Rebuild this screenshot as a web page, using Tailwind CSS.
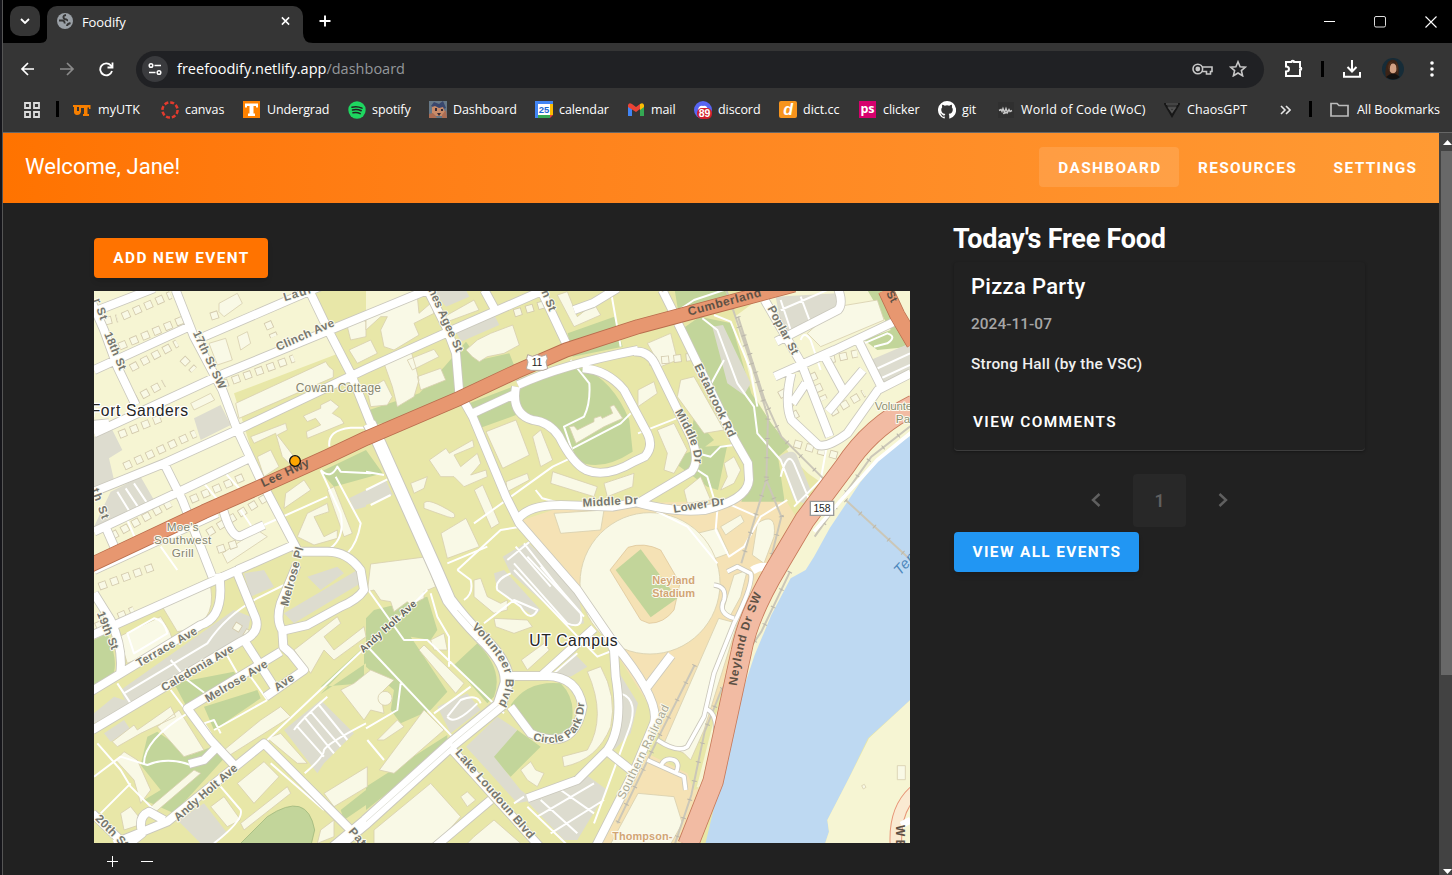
<!DOCTYPE html>
<html lang="en">
<head>
<meta charset="utf-8">
<title>Foodify</title>
<script src="https://cdn.jsdelivr.net/npm/@tailwindcss/browser@4"></script>
</head>
<body class="bg-[#212121]">
<div class="flex h-[875px] w-[1452px] overflow-hidden bg-[#212121] font-['Roboto',sans-serif] text-white">
  <div class="w-[3px] shrink-0 border-r border-[#555] bg-[#15151a]"></div>
  <div class="flex min-w-0 flex-1 flex-col">

    <!-- Browser tab strip -->
    <div class="flex h-[43px] shrink-0 bg-black font-['Open_Sans',sans-serif]">
      <div class="mt-1.5 ml-[7px] flex h-[30px] w-[30px] items-center justify-center rounded-[10px] bg-[#353535]">
        <svg width="10" height="6" viewBox="0 0 10 6" fill="none" stroke="#fff" stroke-width="1.8"><path d="M1 1l4 4 4-4"/></svg>
      </div>
      <svg class="mt-[33px] -mr-px" width="8" height="10" viewBox="0 0 8 10"><path d="M8 0Q8 10 0 10H8z" fill="#353535"/></svg>
      <div class="mt-1.5 flex h-[37px] w-[256px] items-start rounded-t-[10px] bg-[#353535] pt-[7px] pl-[10px]">
        <svg width="16" height="16" viewBox="0 0 16 16"><circle cx="8" cy="8" r="8" fill="#9aa0a6"/><path d="M9 2Q6 2.500 6.500 4.500t3 2q1 .5.500 1.500M2 7.500h3.500Q8 8 7.500 10.500M10 13q0-2 3.500-3" fill="none" stroke="#353535" stroke-width="1.900"/></svg>
        <span class="ml-[9px] text-[13px] leading-[18px] tracking-[-0.1px]">Foodify</span>
        <svg class="ml-auto mr-[13px] mt-[3px]" width="9" height="10" viewBox="0 0 10 10" stroke="#fff" stroke-width="1.700"><path d="M1 1l8 8M9 1L1 9"/></svg>
      </div>
      <svg class="mt-[33px]" width="10" height="10" viewBox="0 0 10 10"><path d="M0 0Q0 10 10 10H0z" fill="#353535"/></svg>
      <svg class="mt-[15px] ml-[6px]" width="12" height="12" viewBox="0 0 12 12" stroke="#fff" stroke-width="1.900"><path d="M6 .5v11M.5 6h11"/></svg>
      <div class="mr-[15px] ml-auto flex items-start pt-4 gap-[39px]">
        <svg width="11" height="12" viewBox="0 0 11 12" stroke="#fff"><path d="M0 5.500h11"/></svg>
        <svg width="12" height="12" viewBox="0 0 12 12" fill="none" stroke="#ddd"><rect x=".5" y=".5" width="11" height="10.500" rx="1.500"/></svg>
        <svg width="12" height="12" viewBox="0 0 12 12" stroke="#fff" stroke-width="1.100"><path d="M.5.5l11 11M11.500.5l-11 11"/></svg>
      </div>
    </div>

    <!-- Address bar -->
    <div class="flex h-[52px] shrink-0 items-center bg-[#353535] font-['Open_Sans',sans-serif]">
      <svg class="ml-[17px]" width="15" height="14" viewBox="0 0 15 14" fill="none" stroke="#fff" stroke-width="1.700"><path d="M14 7H2M8 1L2 7l6 6"/></svg>
      <svg class="ml-[25px]" width="15" height="14" viewBox="0 0 15 14" fill="none" stroke="#8a8a8a" stroke-width="1.700"><path d="M0 7h13M7 1l6 6-6 6"/></svg>
      <svg class="ml-[24px]" width="15" height="15" viewBox="0 0 15 15" fill="none" stroke="#fff" stroke-width="1.800"><path d="M13 9A6 6 0 1 1 11.800 3.400L13.500 5M13.500.5V5.500H8.500"/></svg>
      <div class="ml-[22px] flex h-[37px] w-[1128px] items-center rounded-full bg-[#202124] pl-1.5">
        <div class="flex h-[26px] w-[26px] items-center justify-center rounded-full bg-[#3a3b3e]">
          <svg width="14" height="14" viewBox="0 0 14 14" fill="none" stroke="#fff" stroke-width="1.500"><circle cx="3" cy="3.500" r="1.800"/><path d="M6.500 3.500H13M1 10.500h6.500"/><circle cx="11" cy="10.500" r="1.800"/></svg>
        </div>
        <span class="ml-[9px] text-[14.500px] leading-5 tracking-[0.01px]">freefoodify.netlify.app<span class="text-[#94979b]">/dashboard</span></span>
        <svg class="ml-auto" width="21" height="12" viewBox="0 0 21 12" fill="none" stroke="#c7c7c7" stroke-width="1.600"><circle cx="5.800" cy="6" r="4.800"/><circle cx="5.800" cy="6" r="1.600" fill="#c7c7c7"/><path d="M10 4h10v4.500h-1.500V11h-4V8.500H10"/></svg>
        <svg class="mb-0.5 ml-4 mr-[17px]" width="18" height="17" viewBox="0 0 18 17" fill="none" stroke="#c7c7c7" stroke-width="1.600"><path d="M9 1.800l2.100 4.900 5.300.4-4 3.500 1.200 5.200L9 13l-4.600 2.800 1.200-5.200-4-3.500 5.300-.4z"/></svg>
      </div>
      <svg class="mb-0.5 ml-[20px]" width="19" height="19" viewBox="0 0 19 19" fill="none" stroke="#fff" stroke-width="2"><path d="M2 3h5.500a1.200 1.200 0 0 1 2.600 0H16v5.500a1.200 1.200 0 0 1 0 2.600V17H2v-4.500Q5 12.500 5 10T2 7.500z"/></svg>
      <div class="ml-[18px] h-4 w-[3px] bg-black"></div>
      <svg class="ml-[19px]" width="18" height="18" viewBox="0 0 18 18" fill="none" stroke="#fff" stroke-width="2"><path d="M9 0v11M4.500 7L9 11.500 13.500 7M1 12v4.800h16V12"/></svg>
      <svg class="ml-[21px]" width="22" height="22" viewBox="0 0 22 22"><circle cx="11" cy="11" r="11" fill="#162c38"/><path d="M4 20Q2 10 6 4q5-5 9 0 3 6 1 16z" fill="#3b2316"/><ellipse cx="11" cy="10.500" rx="3.700" ry="5" fill="#d2a184"/><path d="M6 10q0-6 5-6.500Q7 7 8 14zM14 4q4 5 1 12z" fill="#4e2f1d"/><path d="M4 19q7-7 14 0-7 5-14 0" fill="#111"/></svg>
      <svg class="ml-[26px]" width="4" height="16" viewBox="0 0 4 16" fill="#fff"><circle cx="2" cy="2" r="1.800"/><circle cx="2" cy="8" r="1.800"/><circle cx="2" cy="14" r="1.800"/></svg>
    </div>

    <!-- Bookmarks bar -->
    <div class="flex h-[38px] shrink-0 items-start border-b border-[#666] bg-[#353535] pt-[6px] font-['Open_Sans',sans-serif] text-[12.500px] leading-[18px] tracking-[-0.08px] whitespace-nowrap">
      <svg class="mt-px ml-[21px] shrink-0" width="16" height="16" viewBox="0 0 16 16" fill="none" stroke="#ddd" stroke-width="1.800"><path d="M1 1h5v5H1zM10 1h5v5h-5zM1 10h5v5H1zM10 10h5v5h-5z"/></svg>
      <div class="mr-[13px] ml-4 h-4 w-[3px] shrink-0 bg-black"></div>
      <div class="flex w-[88px] shrink-0 gap-[7px] pl-px"><svg class="shrink-0" width="18" height="18" viewBox="0 0 18 18" fill="#f77f00"><path d="M0 4h5v2H4v4h2V6H5V4h12.500v4H16V6.500h-1.500V13H16v2h-6v-2h1V7H8v3.500Q7.500 14 4 14 1 13.500 1 11V6H0z"/></svg><span class="tracking-[0.1px]">myUTK</span></div>
      <div class="flex w-[83px] shrink-0 gap-[6px] pl-px"><svg class="shrink-0" width="18" height="18" viewBox="0 0 18 18"><circle cx="9" cy="9" r="7.600" fill="none" stroke="#e23b2e" stroke-width="2.500" stroke-dasharray="4 1.970"/></svg><span>canvas</span></div>
      <div class="flex w-[105px] shrink-0 gap-[7px]"><svg class="shrink-0" width="17" height="17" viewBox="0 0 17 17"><path fill="#ff8200" d="M0 0h17v17H0z"/><path fill="#fff" d="M2 2.500h13v4h-2V5h-2.500v7.500H12V15H5v-2.500h1.500V5H4v1.500H2z"/></svg><span>Undergrad</span></div>
      <div class="flex w-[81px] shrink-0 gap-[6px]"><svg class="shrink-0" width="18" height="18" viewBox="0 0 18 18"><circle cx="9" cy="9" r="8.700" fill="#1ed760"/><path d="M4 6.200q5-1.400 10 .9M4.500 9q4.500-1.200 8.700.8M5 11.800q4-1 7.200.8" fill="none" stroke="#222" stroke-width="1.500" stroke-linecap="round"/></svg><span>spotify</span></div>
      <div class="flex w-[106px] shrink-0 gap-[6px]"><svg class="shrink-0" width="18" height="17" viewBox="0 0 18 17"><path fill="#667887" d="M0 0h18v17H0z"/><path fill="#39476d" d="M2 5l3-4 5 2 4-3 3 7-5 2-6-2z"/><path fill="#c98b68" d="M3 6l3-1 4 2 4-1 2 5-3 4H7l-4-3z"/><path fill="#392b35" d="M6 7h2v3H6zM12 8h2v2h-2zM8 12h4l-2 3z"/><path fill="#ad6d53" d="M0 13l4-1 4 5H0zM13 14l4-5 1 8h-5z"/></svg><span>Dashboard</span></div>
      <div class="flex w-[93px] shrink-0 gap-[6px]"><svg class="shrink-0" width="18" height="17" viewBox="0 0 18 17"><path fill="#4285f4" d="M0 0h18v3H3v14H0z"/><path fill="#fbbc04" d="M15 3h3v11h-3z"/><path fill="#34a853" d="M3 14h12v3H3z"/><path fill="#ea4335" d="M15 14h3l-3 3z"/><path fill="#fff" d="M3 3h12v11H3z"/><text x="9" y="12" text-anchor="middle" font-size="9.500" font-weight="700" letter-spacing="0" fill="#1967d2" font-family="Liberation Sans">25</text></svg><span>calendar</span></div>
      <div class="flex w-[66px] shrink-0 gap-[7px]"><svg class="mt-[2px] shrink-0" width="16" height="13" viewBox="0 0 16 13"><path d="M0 2h4v11H0z" fill="#4285f4"/><path d="M12 2h4v11h-4z" fill="#34a853"/><path d="M0 2Q1-1 4 1l4 3 4-3v5L8 9 0 4z" fill="#ea4335"/><path d="M12 1q3-2 4 1v2l-4 3z" fill="#fbbc04"/></svg><span>mail</span></div>
      <div class="flex w-[85px] shrink-0 gap-[6px]"><svg class="shrink-0" width="18" height="18" viewBox="0 0 18 18"><circle cx="9" cy="9" r="9" fill="#5865f2"/><path d="M4 9q1-5 5-4 4-1 5 4" fill="#fff"/><rect x="3" y="7" width="15" height="11" rx="5" fill="#d01f2c"/><text x="10.500" y="16" text-anchor="middle" font-size="10.500" font-weight="700" letter-spacing="0" fill="#fff" font-family="Liberation Sans">89</text></svg><span>discord</span></div>
      <div class="flex w-[80px] shrink-0 gap-[6px]"><svg class="shrink-0" width="18" height="17" viewBox="0 0 18 17"><rect width="18" height="17" rx="2" fill="#f7941d"/><text x="9" y="14" text-anchor="middle" font-size="16" font-weight="700" font-style="italic" fill="#fff" font-family="Liberation Sans">d</text></svg><span class="tracking-[-0.02px]">dict.cc</span></div>
      <div class="flex w-[79px] shrink-0 gap-[7px]"><svg class="shrink-0" width="17" height="17" viewBox="0 0 17 17"><path fill="#d6006d" d="M0 0h17v17H0z"/><text x="8.500" y="12" text-anchor="middle" font-size="12.500" font-weight="700" letter-spacing="0" fill="#fff" font-family="Open Sans">ps</text></svg><span>clicker</span></div>
      <div class="flex w-[59px] shrink-0 gap-[6px]"><svg class="shrink-0" width="18" height="18" viewBox="0 0 16 16" fill="#fff"><path d="M8 0a8 8 0 0 0-2.530 15.590c.4.070.55-.17.55-.38v-1.340c-2.230.48-2.700-1.070-2.700-1.070-.36-.92-.89-1.170-.89-1.170-.73-.5.050-.49.050-.49.810.060 1.230.83 1.230.83.720 1.230 1.880.87 2.340.67.070-.52.280-.88.510-1.080-1.780-.2-3.640-.89-3.640-3.950 0-.87.310-1.590.82-2.150-.080-.2-.36-1.020.080-2.120 0 0 .67-.21 2.200.82a7.600 7.600 0 0 1 4 0c1.530-1.040 2.200-.82 2.200-.82.440 1.100.16 1.920.080 2.120.51.560.82 1.270.82 2.150 0 3.070-1.870 3.750-3.650 3.950.29.250.54.730.54 1.480v2.190c0 .21.150.46.550.38A8 8 0 0 0 8 0"/></svg><span>git</span></div>
      <div class="flex w-[167px] shrink-0 gap-[6px]"><svg class="shrink-0" width="18" height="18" viewBox="0 0 18 18"><path fill="#303030" d="M1 1h16v16H1z"/><path d="M2 9.500l2-1 1 2 1-3 1.500 4 1.500-4 1.500 4 1.500-3 1 2 2-1M6 12.500l4-1" fill="none" stroke="#c8c8c8" stroke-width="1.400"/></svg><span class="tracking-[0.2px]">World of Code (WoC)</span></div>
      <div class="flex w-[116px] shrink-0 gap-[7px]"><svg class="shrink-0" width="16" height="18" viewBox="0 0 16 18" fill="none"><path d="M1 3h14L8 15z" stroke="#171717" stroke-width="2"/><path d="M2 3h12M5 7h6l-3 4z" stroke="#555" stroke-width="1.500"/></svg><span class="tracking-[0.08px]">ChaosGPT</span></div>
      <svg class="mt-1 shrink-0" width="11" height="10" viewBox="0 0 11 10" fill="none" stroke="#e5e5e5" stroke-width="1.600"><path d="M1 1l4 4-4 4M6 1l4 4-4 4"/></svg>
      <div class="ml-[18px] h-4 w-[3px] shrink-0 bg-black"></div>
      <svg class="mt-[1px] ml-[18px] shrink-0" width="19" height="15" viewBox="0 0 19 15" fill="none" stroke="#bbb" stroke-width="1.700"><path d="M1 1.500h6l2 2h9V14H1z"/></svg>
      <span class="ml-2 tracking-[-0.03px]">All Bookmarks</span>
    </div>

    <div class="flex min-h-0 flex-1">
      <!-- Page -->
      <div class="flex w-[1436px] shrink-0 flex-col">
        <header class="flex h-[70px] shrink-0 items-center bg-linear-to-r from-[#ff7300] to-[#ff9a33] pl-[22px]">
          <h1 class="pb-[3px] text-[22px] leading-8 tracking-[0.05px]">Welcome, Jane!</h1>
          <nav class="mt-[-2px] mr-[3px] ml-auto flex h-10 text-[15.400px] leading-[42px] font-bold tracking-[1.375px]">
            <a class="w-[140px] rounded bg-white/12 pl-[2px] text-center">DASHBOARD</a>
            <a class="w-[136px] pl-px text-center">RESOURCES</a>
            <a class="w-[121px] text-center">SETTINGS</a>
          </nav>
        </header>

        <main class="flex">
          <section class="ml-[91px] flex w-[816px] shrink-0 flex-col pt-[35px]">
            <button class="h-10 w-[174px] rounded bg-[#ff7300] pt-0.5 pl-px text-[15.400px] font-bold tracking-[1.375px] shadow-md">ADD NEW EVENT</button>
            <svg class="mt-[13px] block h-[552px] w-[816px] bg-[#e8e7a8]" viewBox="0 3 2448 1656" font-family="Liberation Sans, sans-serif">
              <defs>
                <g id="streets">
                  <path d="M0 65L180-5M0 240L285 110M330 140L700-20M0 430L380 255 1000 0M0 605L210 520 430 420 820 235 1076 120 1350 0M0 725L245 610 465 505M245 0L300 140 385 300 430 420 500 570 610 780M-5 40L30 120 70 230 125 345M-10 405L45 400M30 700L65 780M645 0L705 125 770 250 830 400M210 520L265 630 355 860M385 650Q410 745 440 738L510 705M-5 1035L600 765M430 840L600 765M610 785H700Q760 785 800 840L810 900Q790 930 740 950L640 1005 568 1022M1001 0L1056 110 1086 190 1096 310 1136 380 1236 620 1276 700 1450 900 1560 1060M1171 0L1201 55M1341 0L1421 170M1136 370L1256 315M1440 60L1496 40 1570-5M1272 285Q1400 225 1632 180M1266 290Q1250 370 1316 390 1366 395 1396 440 1436 520 1476 540 1536 565 1620 515L1652 500Q1680 470 1660 430L1590 300Q1540 240 1466 235M1270 690Q1300 645 1400 645L1556 650 1640 635 1792 545Q1820 510 1790 440L1682 220Q1662 182 1620 185M1620 635Q1740 670 1832 660 1960 630 1965 570L1962 520 1922 450 1752 100M1705 0L1740 70M2012 30L2122 220M2042 260L2222 180 2412 90M2047 155L2232 60Q2250 40 2230-10M2122 220L2207 440M2092 250Q2070 340 2092 390L2172 465Q2200 475 2260 430L2352 300 2450 250M2187 190L2252 310M2202 365L2307 240M2292 150L2362 290M2135 280L2095 340"/>
                  <path d="M0 840L370 670M375 850Q395 980 320 1005L-10 1205M0 910L50 990Q90 1080 78 1155M-5 1320L440 1055Q500 1030 485 985L430 850M450 1050L540 1190M515 1220L630 1140 590 1090 568 1070 565 1022Q545 990 560 940L608 825M560 1085L280 1255 350 1350 425 1430M370 1370L330 1410 285 1422M60 1660L220 1595 510 1360 770 1620M210 1590L165 1565Q130 1580 145 1630L70 1690M-5 1570L110 1680M1250 1250L1310 1330Q1440 1390 1466 1250 1450 1160 1360 1158H1250M1345 1155L1500 1015M1075 1380L1355 1690M1000 1690L1190 1530M1300 1525L1450 1470 1540 1380Q1590 1310 1565 1160L1560 1080 1540 1040M1535 1380L1610 1440M1500 1680L1622 1440 1680 1300Q1700 1230 1560 1060M1660 1190L1732 1095"/>
                </g>
                <g id="avenues"><path d="M826 400L856 460 1026 840 1065 930Q1110 990 1160 1040M690 1700L816 1595 1070 1365 1230 1235M1160 1040Q1245 1120 1238 1180L1215 1250"/></g>
                <path id="hwy" d="M-10 825L330 665 500 590 700 500 816 445 1096 325 1266 245 1416 180 1632 110 1912 35 2100-15"/>
                <path id="river" d="M2460 345Q2330 410 2252 530L2132 690 2052 825Q1962 975 1942 1085L1857 1475 1782 1665"/>
                <g id="houses">
                  <path d="M30 95L70 85M85 80L230 15M75 170L265 90M110 235L250 160M110 335L210 280M380 285L600 205M75 435L200 385M90 530L305 430M350 80L380 70M520 95L540 140M5 1010L120 960M265 205L300 240M420 1005L460 1030M2152 250L2190 330M2200 210L2290 190M2060 300L2110 390M2210 370L2310 310M2100 460L2240 500M1260 70L1360 40M290 630L450 560M340 730L520 620M50 740L230 640M15 890L180 830M370 780L430 760M1665 215L1800 200"/>
                </g>
                <g id="railways"><path d="M1897 0L1972 220 2022 380 2017 570 1942 820M1932 80L2012 330 2062 440 2197 575M2017 570L2062 680 2032 800M2088 845L2002 1025 1882 1200 1832 1325 1792 1515 1740 1670M1802 1125L1702 1325 1570 1600M2460 400L2332 500 2162 740M2255 630L2450 810"/></g>
                <path id="circ" d="M1316 1350C1380 1370 1425 1352 1444 1326 1466 1298 1474 1260 1470 1205"/>
              </defs>

              <!-- Ground cover -->
              <path fill="#f6f5d3" d="M0 0H650L735 190 420 310 500 570 600 760 350 860 0 1030zM816 0H990L960 20 816 70zM1922 80L2030 0H2450V340L2192 600 2092 500 1982 320z"/>
              <path fill="#f5e2b5" d="M1286 690L1376 660 1632 640 2072 625 2112 690 2020 850 1880 1300 1790 1660H1500L1700 1300 1560 1080 1410 870z"/>
              <path fill="#e8e7a8" d="M1882 1200L1910 1170 1850 1480 1800 1500 1780 1450 1640 1380 1600 1250 1740 1380 1830 1330zM2040 480L2200 590 2120 690z"/>
              <path fill="#c2d59a" d="M680 545L816 480 866 550 720 590zM826 360L976 310 1051 230 1116 155 1156 210 1246 190 1266 240 916 390 836 405zM1126 340L1256 290 1266 375 1156 415zM1276 300Q1376 230 1466 235 1556 270 1606 390L1616 485Q1516 550 1446 510L1366 400Q1266 400 1276 300M1421 130L1561 80 1586 170 1436 200zM1742 0H1892L1902 20 1752 60zM1760 120L1817 80 1912 100 1972 310 2032 400 2087 470 2052 500 2072 635H1942L1970 540 1917 450zM1730 510L1800 480 1830 470 1900 465 1872 600 1840 590zM1800 380L1860 450 1820 480 1790 440zM2320 0L2360 0 2448 100V170L2350 180 2310 150 2390 120zM0 1050L40 1030Q80 1130 50 1165L0 1190z"/>
              <path fill="#c2d59a" d="M240 1180L420 1145 440 1180 280 1255zM330 1250L490 1200 500 1225 360 1320zM160 1340L190 1325 290 1395 380 1360 395 1400 240 1570 150 1530 200 1500 140 1425zM810 1180L680 1190 810 1070zM816 985L840 960 1000 920 1030 1020 1010 1050 950 1040 1060 1205 1010 1260 920 1300 890 1260 900 1200 816 1130zM1080 1125L1150 1060Q1230 1140 1200 1220L1180 1240zM1250 1245Q1300 1170 1400 1180 1460 1240 1420 1340 1340 1380 1250 1245M1190 1400L1270 1320 1340 1370 1250 1460zM740 1560L816 1500V1545L750 1590zM816 1490L1060 1335 1060 1365 816 1560zM680 1212L816 1120V1070z"/>
              <path fill="#dddccf" d="M300 385L380 345 410 405 320 450zM0 440L55 420 85 480 45 505 60 570 0 600zM50 605L140 560 180 630 0 710zM765 625L816 600V650L780 660zM1016 0H1116L1126 20 1056 50zM1086 125L1201 75 1216 105 1101 155zM816 600L876 570 896 615 816 645zM1226 800L1300 755 1450 900 1470 1000 1430 1010 1250 850zM1855 110L1887 105 1970 280 1950 315 1900 280zM2055 500Q2100 470 2110 500L2150 600 2130 640 2100 630zM2045 20L2230 10 2230 60 2070 150zM2330 210L2448 160V240L2350 290zM80 1200L420 960 470 980 460 1030 100 1250zM0 1270L60 1220 120 1240 0 1300zM30 1330L90 1290 110 1320 50 1355zM450 850L510 840 540 890 470 920zM570 970L790 840 816 870 600 1000zM640 860L730 830 750 850 680 900zM570 1320L680 1230 780 1330 690 1420 670 1450zM250 1590L330 1540 400 1630 360 1660H320zM1030 1250L1120 1210 1160 1260 1070 1330zM1116 1370L1210 1280 1270 1320 1200 1400 1280 1500 1320 1530 1270 1540zM1200 850L1230 840 1340 960 1320 980 1210 900zM1380 1150L1440 1090 1480 1130 1430 1160zM1300 1535L1470 1450 1540 1500 1450 1650H1410zM1570 1140L1632 1240 1610 1330 1560 1380z"/>

              <!-- Water -->
              <path fill="none" stroke="#f6f5d3" stroke-width="70" d="M2460 395L2372 460 2252 610 2120 810 2012 975 1962 1095 1892 1305 1842 1500"/>
              <path fill="#bed9f2" d="M2460 430L2372 490 2300 575 2207 715 2160 800 2135 840 2090 865 2032 975 1982 1095 1912 1305 1862 1545 1832 1670H2190L2205 1625 2200 1590 2262 1470 2322 1345 2460 1220z"/>
              <path fill="#f6f5d3" d="M2460 1220L2325 1345 2262 1470 2200 1590 2205 1625 2190 1670H2460z"/>

              <!-- Buildings -->
              <g fill="#f9f9e6" stroke="#d8d0b0" stroke-width="2.500">
                <path d="M425 340L695 215 705 230 718 240V262L435 385zM470 440L575 400 580 420 550 435 600 500 590 525 565 500 545 430 480 460zM490 500L530 480 555 530 510 560zM628 378L680 355V345L710 330 735 350 715 370 740 385 750 400 640 445 637 425 680 405 665 385 640 395zM760 110Q790 75 816 95V140L770 150zM765 180L830 150 850 190 790 220zM290 340L350 310 362 330 300 360zM375 40L430 10 445 40 390 80 375 65zM430 140L460 125 470 160 440 180zM345 160L395 145 415 210 370 225zM575 610L630 570 650 600 570 655zM640 670L700 640 705 665 660 680 690 740 730 720 730 745 660 765 610 740zM700 600L720 590 775 730 750 740zM385 790L490 720 520 740 400 820z"/>
                <path d="M816 80L860 56 970 20 975 70 1010 40 1020 70 960 100 975 135 900 180 870 170 860 120 880 80 860 80 816 120zM1051 80L1140 30 1155 60 1060 95zM1116 180L1150 150 1190 130 1256 105 1276 165 1230 190 1180 200 1156 215 1135 200zM870 220L950 180 965 230 975 270 960 320 910 350 895 290zM940 210L1020 178 1035 200 955 240zM970 260L1040 235 1055 270 980 300zM820 300L870 270 895 320 880 345 830 350zM1176 425L1266 390 1306 495 1226 535zM1006 510L1056 475 1066 490 1136 450 1140 470 1080 495 1100 530 1150 490 1160 520 1130 555 1176 540 1180 560 1110 590 1080 560 1040 560zM950 580L1000 560 990 595 960 610zM990 640Q1000 620 1080 670 1090 690 1060 680L990 655zM1141 600L1166 585 1216 700 1192 715zM1041 730L1116 685 1156 770 1060 805zM1316 440L1340 420 1376 510 1340 530zM1390 15L1420 5 1450 80 1500 40 1520 75 1440 110zM1426 410L1440 408 1450 420 1500 395 1500 385 1520 378 1525 385 1556 370 1548 350 1560 345 1586 385 1530 410 1446 460zM1376 545L1510 590 1500 620 1370 580zM1530 580L1620 550 1616 590 1540 620zM1380 670L1530 660 1520 720 1400 730zM1236 575L1300 550 1306 570 1240 605zM830 822L1000 800 1010 850 1025 890 990 905 990 925 950 945 940 935 900 965 890 935 860 930 840 900 820 905z"/>
                <path d="M1660 160L1730 130 1750 210 1700 230zM1632 300L1680 275 1690 310 1632 350zM1760 270L1800 260 1890 420 1830 430 1750 320zM1690 420L1740 400 1780 480 1740 550 1710 540 1720 490zM1770 600L1820 560 1850 630 1780 640zM1890 520L1920 500 1940 540 1920 580 1880 600 1900 560zM1810 730L1870 715 1905 790 1850 810zM1880 710L1940 675 1950 695 1895 735zM1990 700Q2050 660 2040 740L2010 820 1975 795zM2230 50L2350 30 2370 90 2180 170 2140 130zM1874 985L1930 1000 1830 1320 1790 1410 1770 1390 1710 1360zM1920 855L1960 840 1940 920 1910 975 1885 970z"/>
                <path d="M1632 1510L1740 1520 1765 1600 1720 1680H1540zM75 1040L200 980 225 1020 240 1060 100 1120zM205 950L350 890Q370 1010 250 1025zM190 1310L255 1260 330 1380 270 1400zM55 1355L120 1305 130 1320 230 1250 245 1280 140 1330 70 1370zM65 1410L90 1385 130 1410 170 1500 140 1540 120 1470zM170 1550L300 1440 320 1450 180 1570zM390 1380L500 1290 560 1250 590 1280 400 1400zM430 1480L510 1415 555 1460 480 1540zM350 1550L390 1520 440 1590 400 1610zM600 1080L730 980 740 1000 690 1040 720 1080 810 1010 816 1040 720 1110 690 1080 650 1150zM740 1200L780 1180 830 1140 900 1170 860 1210 870 1270 830 1260 810 1290zM690 1510L820 1430V1490L720 1550zM856 1440L990 1260 1050 1320 900 1450zM850 1350L910 1290 930 1310 870 1350zM975 1080L990 1065 1110 1180 1085 1210zM1010 1050L1050 1030 1060 1080 1020 1080zM1140 870L1160 865 1180 920 1220 940 1240 930 1240 960 1200 970 1140 920zM1200 985L1300 990 1315 1010 1260 1030 1205 1010zM1282 1110L1350 1060 1366 1080 1300 1140zM1480 1145L1520 1130Q1570 1220 1550 1310 1510 1410 1410 1430L1405 1400 1480 1380Q1540 1280 1480 1145zM1280 1440L1310 1415 1325 1440 1350 1450 1330 1490 1300 1470zM840 1620L1010 1480 1100 1580 1030 1660H840zM1140 1640L1200 1590 1280 1660H1120zM1100 1520L1120 1505 1145 1530 1120 1550zM520 1345L560 1330 640 1420 610 1420zM440 1600L580 1490 590 1510 450 1620zM680 1620L720 1590 720 1640 670 1660zM80 1570L110 1550 150 1600 90 1620z"/>
                <ellipse cx="1668" cy="880" rx="210" ry="212"/>
                <circle cx="873" cy="1225" r="21"/><path d="M2410 1427h24v42h-24zM2303 1487l8-4 5 9-8 5z"/>
              </g>
              <path fill="#f5e2b5" stroke="#d9c094" stroke-width="2" d="M1548 840L1602 772Q1650 755 1700 780L1758 880 1740 960Q1710 1000 1665 1000L1640 990z"/>
              <path fill="#c2d59a" d="M1565 840L1640 778 1750 925 1670 982z"/>
              <path fill="#c2d59a" stroke="#96b076" stroke-width="2" d="M430 1670L520 1580Q640 1500 662 1620L650 1670z"/>
              <use href="#houses" fill="none" stroke="#d3caad" stroke-width="24" stroke-dasharray="24 13"/>
              <use href="#houses" fill="none" stroke="#f9f9e6" stroke-width="19" stroke-dasharray="19 18" stroke-dashoffset="-2.500"/>

              <!-- Footpaths and parking aisles -->
              <path fill="none" stroke="#fff" stroke-width="6" stroke-linejoin="round" d="M706 470Q700 420 770 413H820M680 540Q710 570 730 530L740 545 830 550M680 540L740 670Q755 750 700 780M725 560L800 700Q790 760 760 790M510 705L700 620M70 605L110 670M95 595L135 655M120 580L160 640M330 580L380 640M390 545L440 600M440 660L480 720M200 770L250 840M100 690L130 760M816 545L870 555M816 600L880 568M830 645L890 615M1140 700L1376 530 1440 500 1410 410 1470 380Q1490 340 1486 280L1430 210M1436 475L1580 400 1610 370M1325 600L1345 625 1400 640M1090 840L1220 720 1280 710M1240 810L1320 745M1265 770L1370 890M1290 760L1400 900M1550 0L1580 170M1825 85L1870 120 1930 280 1980 350 1990 430 2060 510 2110 640M1860 75L1910 95 1970 240 1990 350M1740 70L1800 30 1890 0M1852 280L1890 210M1632 430L1760 380M1810 490L1850 500 1880 470 1920 465M1810 540L1840 560 1870 660 1865 720 1905 800 1950 770 2000 680 2080 630M1900 640L1990 680M2060 560Q2080 480 2100 520L2150 640M2197 475L2180 570 2100 650M1680 660L1780 710 1870 820M2120 150Q2130 120 2150 150L2180 240M2310 160L2380 130Q2410 140 2380 160L2340 170M2060 60L2200 0M2090 120L2060 30M2150 100L2120 20M2340 240L2448 190M2350 270L2448 225"/>
              <path fill="none" stroke="#fff" stroke-width="6" stroke-linejoin="round" d="M100 1030L180 985Q210 990 220 1030L120 1090zM90 1210L340 1060Q400 970 500 920L600 870M70 1180L110 1240M230 1110L280 1170 360 1230M230 1200L290 1280M390 1080L430 1150M470 1160L520 1230M10 1360L80 1440 110 1490 220 1600M0 1460L80 1400 160 1425Q220 1400 290 1425M150 1420Q150 1350 280 1270M20 1570L110 1480M520 1350L700 1180 816 1070M360 1320L520 1230M350 1330L330 1300 360 1290 380 1330M380 1490L440 1560Q450 1590 360 1660M530 1420L690 1560M630 1280L720 1390M610 1310L690 1400M650 1265L740 1370M675 1245L760 1350M632 1450Q690 1400 690 1380 700 1360 816 1300M600 1320Q620 1290 700 1220M816 890L930 1050 1000 1050 1230 1270M816 1065L1080 1345M1060 820L1180 770M816 1315L910 1260 920 1180M910 990L1000 900M1010 910L1030 980 1065 1040V1130M1090 840L1130 870Q1140 910 1110 930M1170 1000L1260 930 1330 960Q1310 1000 1280 950L1210 900Q1200 870 1250 850M1260 840L1470 1060 1510 1100 1560 1080M1300 800L1460 970Q1470 1020 1420 1000L1260 820M1340 830L1470 980M1060 1280L1100 1230Q1150 1210 1160 1240M1060 1280Q1080 1310 1150 1240M1020 1270L1130 1190M1380 1150L1450 1090M1260 1540L1290 1520M1300 1550L1420 1665M1340 1530L1450 1630M1400 1500L1500 1570M1330 1580L1500 1480M1370 1630L1530 1530M1580 1210Q1640 1230 1600 1330L1500 1600M820 1350L870 1410"/>
              <use href="#railways" fill="none" stroke="#cbc7b8" stroke-width="6"/>
              <use href="#railways" fill="none" stroke="#bbb7aa" stroke-width="15" stroke-dasharray="3 55"/>
              <path fill="none" stroke="#cbc8bb" stroke-width="16" stroke-linejoin="round" d="M1900 845L1930 830 1970 850Q1980 880 1920 1000L1860 1150 1830 1280 1780 1370Q1750 1390 1690 1350M1835 1255Q1870 1270 1865 1330M1660 1410L1770 1460 1775 1500M1700 1430Q1710 1400 1740 1410 1760 1420 1745 1450M1860 885Q1900 890 1890 930 1870 970 1920 985"/>
              <path fill="none" stroke="#fff" stroke-width="11" stroke-linejoin="round" d="M1860 885Q1900 890 1890 930 1870 970 1920 985M1900 845L1930 830 1970 850Q1980 880 1920 1000L1860 1150 1830 1280 1780 1370Q1750 1390 1690 1350M1835 1255Q1870 1270 1865 1330M1660 1410L1770 1460 1775 1500M1700 1430Q1710 1400 1740 1410 1760 1420 1745 1450M2160 725L2250 620 2350 510 2460 420"/>
              <path fill="none" stroke="#fff" stroke-width="24" d="M1975 842Q2000 825 2025 833"/>

              <!-- Roads -->
              <g fill="none" stroke-linejoin="round">
                <use href="#streets" stroke="#cac8bd" stroke-width="29"/>
                <use href="#avenues" stroke="#cac8bd" stroke-width="43"/>
                <use href="#streets" stroke="#fff" stroke-width="24"/>
                <use href="#avenues" stroke="#fff" stroke-width="37"/>
                <path d="M1090 960L1140 1015M816 1595L1070 1370M1075 1360L1220 1240" stroke="#d5d4ca" stroke-width="2"/>
                <use href="#river" stroke="#c77a5a" stroke-width="64"/>
                <use href="#river" stroke="#f2bba3" stroke-width="59"/>
                <path d="M2375 0L2410 75 2460 160" stroke="#b96d4d" stroke-width="48"/>
                <path d="M2375 0L2410 75 2460 160" stroke="#e79770" stroke-width="44"/>
                <use href="#hwy" stroke="#b96d4d" stroke-width="45"/>
                <use href="#hwy" stroke="#e79770" stroke-width="40"/>
                <path d="M2460 1505Q2400 1560 2406 1665" stroke="#e79577" stroke-width="38"/><path d="M2460 1505Q2400 1560 2406 1665" stroke="#faead2" stroke-width="32"/>
                <path d="M2422 1605L2450 1590" stroke="#fff" stroke-width="20"/>
              </g>

              <!-- Labels -->
              <g fill="#77776f" stroke="#fbfaee" stroke-width="6" stroke-linejoin="round" paint-order="stroke" font-size="35" font-weight="700" lengthAdjust="spacing">
                <text transform="translate(552 183) rotate(-24)" textLength="188">Clinch Ave</text>
                <text transform="translate(572 34) rotate(-17)" textLength="88">Laur</text>
                <text transform="translate(30 132) rotate(67)" textLength="120">18th St</text>
                <text transform="translate(-3 30) rotate(70)" textLength="66">r St</text>
                <text transform="translate(296 128) rotate(65)" textLength="190">17th St SW</text>
                <text transform="translate(-8 600) rotate(70)" textLength="95">th St</text>
                <text transform="translate(8 970) rotate(68)" textLength="120">19th St</text>
                <text transform="translate(2 1588) rotate(45)" textLength="125">20th St</text>
                <text transform="translate(1003 0) rotate(66)" textLength="206">nes Agee St</text>
                <text transform="translate(1342 5) rotate(68)" textLength="65">n St</text>
                <text transform="translate(1700 -5) rotate(65)" textLength="25">t</text>
                <text transform="translate(2020 55) rotate(62)" textLength="160">Poplar St</text>
                <text transform="translate(1800 228) rotate(64)" textLength="240">Estabrook Rd</text>
                <path id="mid" d="M1742 365Q1810 480 1800 525" fill="none" stroke="none"/><text><textPath href="#mid" textLength="168">Middle Dr</textPath></text>
                <text transform="translate(1466 650) rotate(-3)" textLength="166">Middle Dr</text>
                <text transform="translate(1740 668) rotate(-9)" textLength="155">Lower Dr</text>
                <text transform="translate(135 1132) rotate(-30)" textLength="205">Terrace Ave</text>
                <text transform="translate(210 1205) rotate(-30)" textLength="245">Caledonia Ave</text>
                <text transform="translate(342 1238) rotate(-31)" textLength="212">Melrose Ave</text>
                <text transform="translate(550 1205) rotate(-34)" textLength="64">Ave</text>
                <text transform="translate(582 950) rotate(-75)" textLength="182">Melrose Pl</text>
                <text transform="translate(252 1595) rotate(-41)" textLength="240">Andy Holt Ave</text>
                <text transform="translate(808 1090) rotate(-42)" font-size="31" textLength="218" fill="#666761">Andy Holt Ave</text>
                <text transform="translate(762 1625) rotate(49)" textLength="60">Pat</text>
                <path id="volpath" d="M1132 1012Q1240 1120 1235 1175 1235 1215 1202 1260" fill="none" stroke="none"/><text><textPath href="#volpath" textLength="270">Volunteer Blvd</textPath></text>
                <text font-size="33"><textPath href="#circ" textLength="232">Circle Park Dr</textPath></text>
                <text transform="translate(1082 1390) rotate(49)" textLength="342">Lake Loudoun Blvd</text>
                <text transform="translate(1590 1530) rotate(-64)" textLength="310" fill="#aaa894" font-weight="400">Southern Railroad</text>
                <text x="605" y="306" textLength="256" fill="#85856e" font-weight="400" font-size="36">Cowan Cottage</text>
                <g fill="#84846f" text-anchor="middle" font-weight="400"><text x="266" y="722" textLength="96">Moe's</text><text x="266" y="761" textLength="172">Southwest</text><text x="266" y="800" textLength="66">Grill</text></g>
                <g fill="#8f9272" font-weight="400"><text x="2342" y="360" textLength="142">Volunteer</text><text x="2405" y="398" textLength="74">Park</text></g>
                <g fill="#d2a574" text-anchor="middle" font-size="33"><text x="1739" y="881" textLength="128">Neyland</text><text x="1739" y="921" textLength="128">Stadium</text><text x="1645" y="1650" textLength="180">Thompson-</text></g>
              </g>
              <g fill="#5e5145" font-weight="700" font-size="36">
                <text transform="translate(508 592) rotate(-25)" textLength="155">Lee Hwy</text>
                <text transform="translate(1785 77) rotate(-15)" textLength="226">Cumberland</text>
                <text transform="translate(2376 10) rotate(62)" font-size="34">St</text>
                <path id="ney" d="M1928 1188Q1950 1030 2005 910" fill="none"/><text><textPath href="#ney" textLength="285">Neyland Dr SW</textPath></text>
                <text transform="translate(2405 1605) rotate(90)">W B</text>
              </g>
              <text transform="translate(2418 858) rotate(-48)" font-size="44" font-style="italic" fill="#4e88bc" textLength="75">Ten</text>
              <g fill="#252525" stroke="#fff" stroke-width="8" paint-order="stroke" stroke-linejoin="round" font-size="47">
                <text x="-10" y="378" textLength="292">Fort Sanders</text><text x="1306" y="1069" textLength="265">UT Campus</text>
              </g>
              <path d="M1301 194l14 5 14-5 14 5 14-5 3 12-4 10 5 20-14 5h-36l-14-5 5-20-4-10z" fill="#fff" stroke="#b4a89d" stroke-width="3"/>
              <text x="1329" y="229" text-anchor="middle" font-size="31" fill="#222">11</text>
              <path d="M2149 634h70v42h-70z" fill="#fff" stroke="#999" stroke-width="4"/>
              <text x="2184" y="667" text-anchor="middle" font-size="31" fill="#222">158</text>
              <circle cx="603" cy="513" r="16" fill="#ffa500" stroke="#111" stroke-width="4"/>
            </svg>
            <div class="mt-[13px] flex items-center gap-[23px] pl-[13px]">
              <svg width="11" height="11" viewBox="0 0 11 11" stroke="#fff"><path d="M5.500 0v11M0 5.500h11"/></svg>
              <svg width="12" height="11" viewBox="0 0 12 11" stroke="#fff"><path d="M0 5.500h12"/></svg>
            </div>
          </section>

          <section class="ml-[44px] flex w-[411px] flex-col items-start pt-[18px]">
            <h2 class="mt-px -ml-px text-[27px] leading-[35px] font-bold tracking-[-0.25px]">Today's Free Food</h2>
            <article class="mt-[5px] flex h-[189px] w-full flex-col items-start rounded border-b border-[#3c3c3c] px-[17px] pt-[9px] shadow-[0_1px_3px_rgba(0,0,0,.35)]">
              <h3 class="text-[22px] leading-[32px] font-medium tracking-[0.3px]">Pizza Party</h3>
              <p class="mt-[9px] text-[15.400px] leading-6 font-medium tracking-[0.05px] text-[#a6a6a6]">2024-11-07</p>
              <p class="mt-4 text-[15.400px] leading-6 font-medium tracking-[0.23px] text-[#f0f0f0]">Strong Hall (by the VSC)</p>
              <button class="mt-[34px] pl-[2px] text-[15.400px] leading-6 font-semibold tracking-[1.375px]">VIEW COMMENTS</button>
            </article>
            <nav class="mt-[23px] flex h-[53px] w-full items-center justify-center text-[#606060]">
              <svg class="mb-0.5" width="10" height="14" viewBox="0 0 10 14" fill="none" stroke="currentColor" stroke-width="2.400"><path d="M8.500 1L2 7l6.500 6"/></svg>
              <span class="mx-[32px] flex h-[53px] w-[53px] items-center justify-center rounded bg-[#282828] pt-px text-[17.600px] font-semibold">1</span>
              <svg class="mb-0.5" width="10" height="14" viewBox="0 0 10 14" fill="none" stroke="currentColor" stroke-width="2.400"><path d="M1.500 1L8 7l-6.500 6"/></svg>
            </nav>
            <button class="mt-[5px] h-10 w-[185px] rounded bg-[#2196f3] pt-0.5 pl-px text-[15.400px] font-bold tracking-[1.375px] shadow-md">VIEW ALL EVENTS</button>
          </section>
        </main>
      </div>

      <!-- Scrollbar -->
      <div class="flex w-[13px] shrink-0 flex-col bg-[#424242]">
        <div class="flex h-[18px] justify-end pt-[7px]"><svg width="9" height="6" viewBox="0 0 9 6" fill="#fff"><path d="M0 5L4.500 0 9 5z"/></svg></div>
        <div class="ml-[2px] h-[524px] bg-[#686868]"></div>
        <div class="mt-auto flex justify-end pb-px"><svg width="9" height="6" viewBox="0 0 9 6" fill="#fff"><path d="M0 1L4.500 6 9 1z"/></svg></div>
      </div>
    </div>
  </div>
</div>
</body>
</html>
